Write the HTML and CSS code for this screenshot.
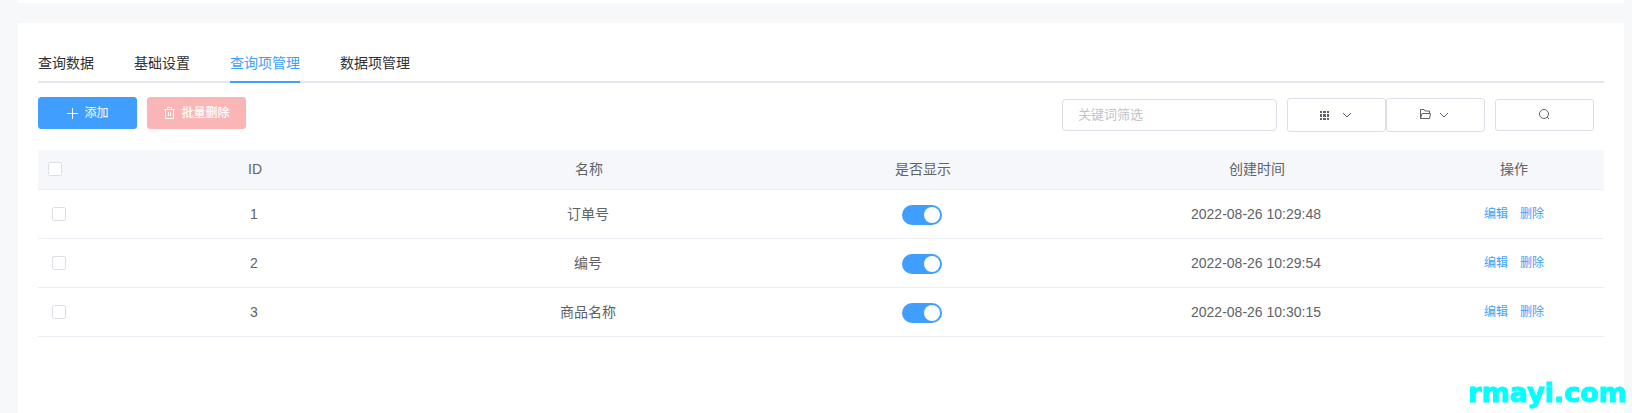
FILE: index.html
```html
<!DOCTYPE html>
<html lang="zh-CN">
<head>
  <meta charset="UTF-8" />
  <meta name="viewport" content="width=device-width, initial-scale=1.0" />
  <title>查询项管理</title>
  <link rel="stylesheet" href="styles.css">
</head>
<body>
  <div class="prev-card"></div>
  <main class="card">
    <nav class="tabs">
      <a href="#data">查询数据</a>
      <a href="#base">基础设置</a>
      <a href="#query" class="active">查询项管理</a>
      <a href="#items">数据项管理</a>
    </nav>

    <div class="toolbar">
      <div class="left">
        <button type="button" class="btn primary">
          <svg width="12" height="12" viewBox="0 0 12 12"><path d="M6.500 1v11M1 6.500h11" /></svg>
          <span>添加</span>
        </button>
        <button type="button" class="btn danger" disabled>
          <svg width="12" height="12" viewBox="0 0 12 12"><path d="M1 2.500h11M4.500 2.500v-2h4v2M2.500 2.500v9h8v-9M5.500 5v4M7.500 5v4" /></svg>
          <span>批量删除</span>
        </button>
      </div>
      <div class="right">
        <input type="text" class="keyword" placeholder="关键词筛选" aria-label="关键词筛选">
        <div class="group">
          <button type="button" class="btn tall" aria-label="列设置">
            <svg class="grid-icon" width="10" height="10" viewBox="0 0 10 10"><path d="M0 1h2v2H0zM3 1h3v2H3zM7 1h2v2H7zM0 4h2v3H0zM3 4h3v3H3zM7 4h2v3H7zM0 8h2v2H0zM3 8h3v2H3zM7 8h2v2H7z" /></svg>
            <svg class="arrow" width="12" height="12" viewBox="0 0 12 12"><path d="M1 4l4 4 4-4" /></svg>
          </button>
          <button type="button" class="btn tall folder" aria-label="导出">
            <svg width="12" height="12" viewBox="0 0 12 12"><path d="M.5 9.500v-9H4l1 1.500h4.500v2M.5 9.500l1.500-5h8.500l-1 5z" /></svg>
            <svg class="arrow" width="12" height="12" viewBox="0 0 12 12"><path d="M0 4l4 4 4-4" /></svg>
          </button>
        </div>
        <button type="button" class="btn" aria-label="搜索">
          <svg width="12" height="12" viewBox="0 0 12 12"><circle cx="5" cy="5" r="4.500" /><path d="M8 8l2 2" /></svg>
        </button>
      </div>
    </div>

    <table>
      <colgroup>
        <col class="col-check">
        <col>
        <col>
        <col>
        <col>
        <col class="col-action">
      </colgroup>
      <thead>
        <tr>
          <th class="check"><input type="checkbox" aria-label="全选"></th>
          <th>ID</th>
          <th>名称</th>
          <th>是否显示</th>
          <th>创建时间</th>
          <th>操作</th>
        </tr>
      </thead>
      <tbody>
        <tr>
          <td class="check"><input type="checkbox" aria-label="选择 1"></td>
          <td>1</td>
          <td>订单号</td>
          <td><input type="checkbox" class="switch" aria-label="显示订单号" checked></td>
          <td>2022-08-26 10:29:48</td>
          <td><div class="actions"><a href="#edit">编辑</a><a href="#del">删除</a></div></td>
        </tr>
        <tr>
          <td class="check"><input type="checkbox" aria-label="选择 2"></td>
          <td>2</td>
          <td>编号</td>
          <td><input type="checkbox" class="switch" aria-label="显示编号" checked></td>
          <td>2022-08-26 10:29:54</td>
          <td><div class="actions"><a href="#edit">编辑</a><a href="#del">删除</a></div></td>
        </tr>
        <tr>
          <td class="check"><input type="checkbox" aria-label="选择 3"></td>
          <td>3</td>
          <td>商品名称</td>
          <td><input type="checkbox" class="switch" aria-label="显示商品名称" checked></td>
          <td>2022-08-26 10:30:15</td>
          <td><div class="actions"><a href="#edit">编辑</a><a href="#del">删除</a></div></td>
        </tr>
      </tbody>
    </table>
  </main>
  <div class="watermark">rmayi.com</div>
</body>
</html>
```
FILE: styles.css
```css
* {
  box-sizing: border-box;
}
body {
  margin: 0;
  padding: 0 8px 0 18px;
  min-height: 100vh;
  display: flex;
  flex-direction: column;
  gap: 20px;
  background: #f6f8f9;
  color: #606266;
  font-family: "Liberation Sans", "Noto Sans CJK SC", sans-serif;
  font-size: 14px;
}
a {
  text-decoration: none;
}
.prev-card {
  height: 3px;
  background: #fff;
}
.card {
  flex: 1;
  padding: 20px;
  background: #fff;
}

/* tabs */
.tabs {
  display: flex;
  gap: 40px;
  border-bottom: 2px solid #e4e7ed;
}
.tabs a {
  height: 40px;
  margin-bottom: -2px;
  line-height: 40px;
  color: #303133;
  border-bottom: 2px solid transparent;
}
.tabs a.active {
  color: #409eff;
  border-bottom-color: #409eff;
}

/* toolbar */
.toolbar {
  display: flex;
  justify-content: space-between;
  align-items: flex-start;
  padding: 14px 0 18px;
}
.left,
.right {
  display: flex;
  gap: 10px;
}
.right {
  align-items: center;
  padding: 1px 10px 0 0;
}
.group {
  display: flex;
}
.btn {
  display: flex;
  justify-content: center;
  align-items: center;
  gap: 6px;
  width: 99px;
  height: 32px;
  padding: 0;
  border: 1px solid #dcdfe6;
  border-radius: 3px;
  background: #fff;
  color: #606266;
  font-family: inherit;
  font-size: 12px;
  line-height: 12px;
  cursor: pointer;
}
.btn svg {
  overflow: visible;
  fill: none;
  stroke: currentColor;
}
.btn .grid-icon {
  fill: currentColor;
  stroke: none;
}
.tall {
  height: 34px;
  gap: 12px;
}
.folder {
  gap: 8px;
}
.primary {
  background: #409eff;
  border-color: #409eff;
  color: #fff;
}
.danger {
  background: #fab6b6;
  border-color: #fab6b6;
  color: #fff;
  font-weight: 500;
  cursor: not-allowed;
}
.keyword {
  width: 215px;
  height: 32px;
  padding: 0 15px 2px;
  border: 1px solid #dcdfe6;
  border-radius: 4px;
  color: #606266;
  font-family: inherit;
  font-size: 13px;
}
.keyword::placeholder {
  color: #c0c4cc;
}

/* table */
table {
  width: 100%;
  table-layout: fixed;
  border-collapse: separate;
  border-spacing: 0;
}
.col-check {
  width: 50px;
}
.col-action {
  width: 180px;
}
th,
td {
  padding: 0;
  border-bottom: 1px solid #ebeef5;
  text-align: center;
  font-weight: 400;
  line-height: 20px;
}
th {
  height: 40px;
  padding-bottom: 2px;
  background: #f5f7fa;
}
td {
  height: 49px;
}
td:not(.check) {
  padding-right: 2px;
}
td:last-child:not(.check) {
  padding-right: 0;
}
th.check {
  padding-left: 10px;
}
td.check {
  padding-left: 14px;
}
.check input {
  appearance: none;
  display: block;
  width: 14px;
  height: 14px;
  margin: 0;
  border: 1px solid #dcdfe6;
  border-radius: 2px;
  background: #fff;
}
.check input:checked {
  background: #409eff;
  border-color: #409eff;
}
.switch {
  appearance: none;
  display: block;
  width: 40px;
  height: 20px;
  margin: 2px auto 0;
  padding: 2px;
  border-radius: 10px;
  background: #dcdfe6;
  cursor: pointer;
}
.switch::before {
  content: "";
  display: block;
  width: 16px;
  height: 16px;
  border-radius: 50%;
  background: #fff;
}
.switch:checked {
  background: #409eff;
}
.switch:checked::before {
  margin-left: auto;
}
.actions {
  display: flex;
  justify-content: center;
  gap: 12px;
  font-size: 12px;
}
.actions a {
  color: #409eff;
}

.watermark {
  position: fixed;
  right: 5px;
  bottom: 5px;
  color: #0ff;
  font-family: "DejaVu Sans", sans-serif;
  font-size: 27px;
  font-weight: 700;
  line-height: 30px;
  -webkit-text-stroke: 1px #0ff;
}
```
